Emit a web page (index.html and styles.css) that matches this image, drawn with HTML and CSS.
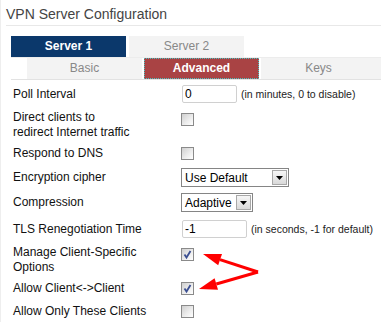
FILE: index.html
```html
<!DOCTYPE html>
<html lang="en">
<head>
    <meta charset="UTF-8">
    <title>VPN Server Configuration</title>
    <link rel="stylesheet" href="styles.css">
</head>
<body>
    <div class="panel">
        <h2 class="panel-title">VPN Server Configuration</h2>

        <div class="tabs">
            <div class="tab-row">
                <a href="#" class="tab active-server">Server 1</a>
                <a href="#" class="tab">Server 2</a>
            </div>
            <div class="tab-row sub-tabs">
                <a href="#" class="tab">Basic</a>
                <a href="#" class="tab active-sub">Advanced</a>
                <a href="#" class="tab last-tab">Keys</a>
            </div>
        </div>

        <div class="form">
            <div class="row">
                <div class="label">Poll Interval</div>
                <input type="text" class="text-input" value="0">
                <span class="hint">(in minutes, 0 to disable)</span>
            </div>
            <div class="row multi">
                <div class="label">Direct clients to<br>redirect Internet traffic</div>
                <span class="checkbox"></span>
            </div>
            <div class="row">
                <div class="label">Respond to DNS</div>
                <span class="checkbox"></span>
            </div>
            <div class="row">
                <div class="label">Encryption cipher</div>
                <div class="select cipher">
                    <span class="select-text">Use Default</span>
                    <span class="select-btn"><svg width="7" height="4" viewBox="0 0 7 4"><polygon points="0,0 7,0 3.5,4" fill="#000"/></svg></span>
                </div>
            </div>
            <div class="row">
                <div class="label">Compression</div>
                <div class="select compression">
                    <span class="select-text">Adaptive</span>
                    <span class="select-btn"><svg width="7" height="4" viewBox="0 0 7 4"><polygon points="0,0 7,0 3.5,4" fill="#000"/></svg></span>
                </div>
            </div>
            <div class="row">
                <div class="label">TLS Renegotiation Time</div>
                <input type="text" class="text-input tls" value="-1">
                <span class="hint">(in seconds, -1 for default)</span>
            </div>
            <div class="row multi">
                <div class="label">Manage Client-Specific<br>Options</div>
                <span class="checkbox"><svg width="11" height="11" viewBox="0 0 11 11"><polyline points="2.5,5.5 4.5,8.5 8.5,2" fill="none" stroke="#3b4f91" stroke-width="1.8"/></svg></span>
            </div>
            <div class="row">
                <div class="label">Allow Client&lt;-&gt;Client</div>
                <span class="checkbox"><svg width="11" height="11" viewBox="0 0 11 11"><polyline points="2.5,5.5 4.5,8.5 8.5,2" fill="none" stroke="#3b4f91" stroke-width="1.8"/></svg></span>
            </div>
            <div class="row">
                <div class="label">Allow Only These Clients</div>
                <span class="checkbox"></span>
            </div>
        </div>

        <!-- annotation arrows drawn over the form -->
        <svg class="arrows" width="381" height="322" viewBox="0 0 381 322">
            <line x1="258" y1="272" x2="220" y2="259.6" stroke="#f00" stroke-width="3"/>
            <polygon points="203,254 222,253.9 218.2,265.3" fill="#f00"/>
            <line x1="258" y1="272" x2="216.3" y2="284" stroke="#f00" stroke-width="3"/>
            <polygon points="199,289 214.6,278.2 218,289.8" fill="#f00"/>
        </svg>
    </div>
</body>
</html>
```

FILE: styles.css
```css
* {
    margin: 0;
    padding: 0;
    box-sizing: border-box;
    font-family: "Liberation Sans", Arial, sans-serif;
}
body {
    background-color: #fff;
    color: #000;
    width: 381px;
    height: 322px;
    overflow: hidden;
}
.panel {
    position: relative;
    height: 322px;
    border-left: 1px solid #eeeeee;
}
.panel-title {
    font-size: 14px;
    font-weight: normal;
    line-height: 16px;
    color: #444;
    margin-left: 5px;
    padding: 6px 0 3px 0;
    border-bottom: 1px solid #e8e8e8;
}
.tabs {
    margin: 10px 0 0 10px;
    border-bottom: 1px solid #e2e2e2;
}
.tab-row {
    display: flex;
    gap: 3px;
}
.tab {
    width: 115px;
    height: 21px;
    line-height: 21px;
    text-align: center;
    font-size: 12px;
    color: #888;
    text-decoration: none;
    background-color: #f3f3f3;
}
.sub-tabs {
    border-top: 1px solid #ececec;
    padding-left: 16px;
    gap: 2px;
}
.last-tab {
    width: 120px;
    padding-right: 5px;
}
.active-server {
    background-color: #0b386b;
    color: #fff;
    font-weight: bold;
}
.active-sub {
    background-color: #a94344;
    color: #fff;
    font-weight: bold;
    outline: 1px dotted #4cc2c2;
    outline-offset: -1px;
}
.form {
    margin-left: 12px;
}
.row {
    display: flex;
    align-items: center;
    padding: 2px 0;
}
.row.multi {
    align-items: flex-start;
}
.label {
    width: 168px;
    font-size: 12px;
    line-height: 15px;
    color: #111;
}
.text-input {
    width: 55px;
    height: 18px;
    margin: 3px 0 3px 1px;
    padding: 0 2px;
    border: 1px solid #d0d0d0;
    border-radius: 2px;
    font-size: 12px;
    color: #000;
    outline: none;
}
.text-input.tls {
    width: 65px;
}
.hint {
    font-size: 10.5px;
    color: #222;
    margin-left: 4px;
}
.checkbox {
    width: 13px;
    height: 13px;
    margin: 3px 0;
    border: 1px solid #8a8a8a;
    background: linear-gradient(135deg, #cfcfcf 0%, #ececec 55%, #fff 100%);
    display: flex;
    align-items: center;
    justify-content: center;
}
.select {
    height: 19px;
    margin: 1px 0;
    border: 1px solid #858585;
    display: flex;
    align-items: center;
    justify-content: space-between;
    padding: 1px;
    background-color: #fff;
}
.select.cipher {
    width: 108px;
}
.select.compression {
    width: 72px;
}
.select-text {
    font-size: 12px;
    padding-left: 2px;
}
.select-btn {
    width: 15px;
    height: 15px;
    border: 1px solid #a8a8a8;
    background: linear-gradient(#f6f6f6, #d9d9d9);
    display: flex;
    align-items: center;
    justify-content: center;
}
.arrows {
    position: absolute;
    left: -1px;
    top: 0;
    pointer-events: none;
}
```
